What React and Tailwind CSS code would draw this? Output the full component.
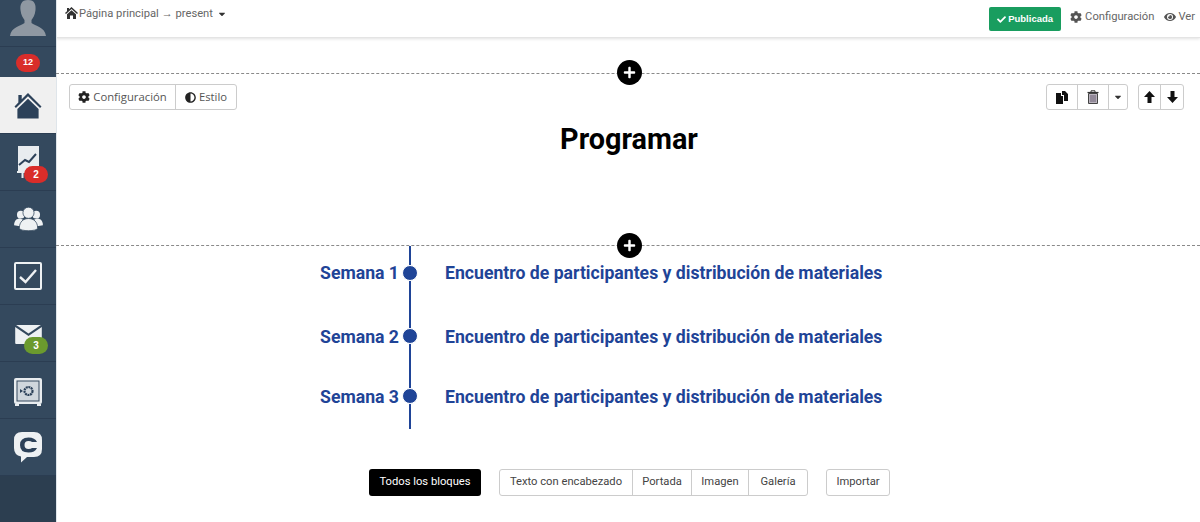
import { FaCaretDown, FaCheck, FaCog, FaEye, FaAdjust, FaPlus } from 'react-icons/fa';

function HomeIcon() {
  return (
    <svg width="30" height="27" viewBox="0 0 30 28" fill="#2c4159">
      <path d="M15 1 L29 15 L27.500 16.500 L15 4.500 L2.500 16.500 L1 15 L5 11 L5 3 L8.500 3 L8.500 7.500 Z" />
      <path d="M15 7 L26 17.500 L26 27.500 L4 27.500 L4 17.500 Z" />
    </svg>
  );
}

function SmallHomeIcon() {
  return (
    <svg className="-translate-y-[1px]" width="13" height="12" viewBox="0 0 13 12" fill="#333">
      <path d="M6.500 0 L13 6 L12 7 L6.500 2 L1 7 L0 6 L2 4.200 L2 1 L4 1 L4 2.300 Z" />
      <path d="M6.500 3.200 L11 7.300 V12 H8 V8.500 H5 V12 H2 V7.300 Z" />
    </svg>
  );
}

function ChartIcon() {
  return (
    <svg width="22" height="32" viewBox="0 0 22 32">
      <path d="M1 0 H22 V25 H1 Z" fill="#e8ecef" />
      <path d="M2 19 L8 14 L12 16 L19 8" stroke="#2c4159" strokeWidth="2" fill="none" />
      <path d="M0 25 H11 V27 H6.500 V32 H4.500 V27 H0 Z" fill="#e8ecef" />
    </svg>
  );
}

function UsersIcon() {
  return (
    <svg width="29" height="25" viewBox="0 0 30 26" fill="#eef1f3">
      <circle cx="7" cy="8" r="4" />
      <circle cx="23" cy="8" r="4" />
      <path d="M0 19 C0 14 3 12 6 12 L9 13 L6 20 Z" />
      <path d="M30 19 C30 14 27 12 24 12 L21 13 L24 20 Z" />
      <circle cx="15" cy="6" r="5.800" fill="#eef1f3" stroke="#34495e" strokeWidth="0.8" />
      <path d="M5.500 22 C5.500 15 10 12 15 12 C20 12 24.500 15 24.500 22 C24.500 25.500 5.500 25.500 5.500 22 Z" stroke="#34495e" strokeWidth="0.8" />
    </svg>
  );
}

function CheckIcon() {
  return (
    <svg width="28" height="28" viewBox="0 0 28 28" fill="none">
      <rect x="1" y="1" width="26" height="26" rx="1" stroke="#eef1f3" strokeWidth="2" />
      <path d="M6 15 L11.500 20 L22 8" stroke="#eef1f3" strokeWidth="2.400" />
    </svg>
  );
}

function MailIcon() {
  return (
    <svg className="mt-[3px]" width="27" height="19" viewBox="0 0 28 20" fill="#eef1f3">
      <path d="M1 0 H27 L14 9 Z" />
      <path d="M0 2 L14 11.500 L28 2 V19 Q28 20 27 20 H1 Q0 20 0 19 Z" />
    </svg>
  );
}

function SafeIcon() {
  return (
    <svg className="mt-[3px]" width="28" height="28" viewBox="0 0 28 28">
      <rect x="0" y="0" width="28" height="26" rx="2" fill="#e8ecef" />
      <rect x="3" y="3" width="22" height="20" fill="#cfd6dc" stroke="#34495e" strokeWidth="1" />
      <path d="M1 26 H5 V28 H1 Z M23 26 H27 V28 H23 Z" fill="#e8ecef" />
      <circle cx="14.500" cy="13" r="4" fill="none" stroke="#2c4159" strokeWidth="2.200" strokeDasharray="2 0.6" />
      <path d="M6 11 L9 13 L6 15 Z" fill="#2c4159" />
    </svg>
  );
}

function ChatCIcon() {
  return (
    <svg width="28" height="31" viewBox="0 0 28 31">
      <path d="M8 0 H20 Q28 0 28 8 V17 Q28 25 20 25 H13 L7 30.500 L7 24.500 Q0 23 0 16 V8 Q0 0 8 0 Z" fill="#eef1f3" />
      <path d="M23 10 Q21 5.500 14.500 5.500 Q6 5.500 6 13 Q6 20.500 14.500 20.500 Q21 20.500 23 16 H18 Q17 17 14.500 17 Q10.500 17 10.500 13 Q10.500 9 14.500 9 Q17 9 18 10 Z" fill="#2c4159" />
    </svg>
  );
}

function PasteIcon() {
  return (
    <svg width="12" height="13" viewBox="0 0 12 13" fill="#111">
      <path d="M0 2 H5 V5 H7 V13 H0 Z" />
      <path d="M6 0 H9 L12 3 V10 H8 V4 H6 Z" />
    </svg>
  );
}

function TrashIcon() {
  return (
    <svg width="12" height="14" viewBox="0 0 12 14" fill="none">
      <path d="M0.500 2.500 H11.500" stroke="#333" strokeWidth="1.200" />
      <path d="M4 2 V0.800 H8 V2" stroke="#333" />
      <path d="M1.500 3.500 H10.500 V13.500 H1.500 Z" fill="#b9b3bd" stroke="#444" />
      <path d="M4 5 V12 M6 5 V12 M8 5 V12" stroke="#6b5f75" />
    </svg>
  );
}

function ArrowIcon({ down }) {
  return (
    <svg className={down ? 'rotate-180' : ''} width="11" height="12" viewBox="0 0 11 12" fill="#111">
      <path d="M5.500 0 L11 6 H7.500 V12 H3.500 V6 H0 Z" />
    </svg>
  );
}

function NavItem({ active, children, badge, badgeColor }) {
  return (
    <div className={`relative flex h-[57px] items-center justify-center border-b border-[#2b3d52] ${active ? 'bg-[#f0f0f0]' : ''}`}>
      {children}
      {badge && (
        <span className={`absolute left-[24px] top-[32px] flex h-[17px] w-[24px] items-center justify-center rounded-full font-['Liberation_Sans',sans-serif] text-[10px] font-bold text-white ${badgeColor}`}>
          {badge}
        </span>
      )}
    </div>
  );
}

function Sidebar() {
  return (
    <aside className="relative flex w-[56px] shrink-0 flex-col bg-[#34495e] shadow-[1px_0_0_#dfe5ea]">
      <div className="flex h-[47px] items-start justify-center overflow-hidden border-b border-[#2b3d52]">
        <svg width="38" height="36" viewBox="0 0 38 36" fill="#8f98a2">
          <path d="M19 0 C12 0 11 5 11.500 10 C12 15 14 18 15.500 20 L15.500 23 C12 26 2 27 1 36 H37 C36 27 26 26 22.500 23 L22.500 20 C24 18 26 15 26.500 10 C27 5 26 0 19 0 Z" />
        </svg>
      </div>
      <div className="flex h-[30px] items-center justify-center pt-[2px]">
        <span className="flex h-[18px] w-[24px] items-center justify-center rounded-full bg-[#d92d2a] font-['Liberation_Sans',sans-serif] text-[9px] font-bold text-white">12</span>
      </div>
      <NavItem active><HomeIcon /></NavItem>
      <NavItem badge="2" badgeColor="bg-[#d92d2a]"><ChartIcon /></NavItem>
      <NavItem><UsersIcon /></NavItem>
      <NavItem><CheckIcon /></NavItem>
      <NavItem badge="3" badgeColor="bg-[#6b9a2e]"><MailIcon /></NavItem>
      <NavItem><SafeIcon /></NavItem>
      <NavItem><ChatCIcon /></NavItem>
      <div className="flex-1 bg-[#2c3e50]" />
    </aside>
  );
}

function TopBar() {
  return (
    <header className="flex h-[38px] items-start justify-between border-b border-[#e4e4e4] shadow-[0_1px_3px_rgba(0,0,0,0.12)] font-['Roboto',sans-serif] text-[11.2px] text-[#666]">
      <div className="flex items-center pl-[9px] pt-[6px]">
        <SmallHomeIcon />
        <span className="pl-[1px]">Página principal → present</span>
        <FaCaretDown className="ml-[4px] text-[10px] text-[#333]" />
      </div>
      <div className="flex items-center pr-[5px] pt-[7px]">
        <span className="flex h-[24px] w-[72px] items-center justify-center rounded-[2px] bg-[#199d5f] font-['Liberation_Sans',sans-serif] text-[9.5px] font-bold text-white">
          <FaCheck className="mr-[2px] text-[9px]" />
          Publicada
        </span>
        <span className="ml-[9px] flex -translate-y-[2px] items-center">
          <FaCog className="mr-[3px] text-[12px] text-[#555]" />
          Configuración
        </span>
        <span className="ml-[10px] flex -translate-y-[2px] items-center">
          <FaEye className="mr-[2px] text-[12px] text-[#555]" />
          Ver
        </span>
      </div>
    </header>
  );
}

function AddButton({ top }) {
  return (
    <button className={`absolute left-[561px] flex h-[25px] w-[25px] items-center justify-center rounded-full bg-black text-white ${top}`}>
      <FaPlus className="text-[13px]" />
    </button>
  );
}

function ProgramaSection() {
  return (
    <section className="relative mt-[35px] h-[172px] border-t border-dashed border-[#8a8a8a]">
      <AddButton top="top-[-14px]" />
      <div className="flex justify-between pl-[13px] pr-[16px] pt-[10px]">
        <div className="flex h-[26px] items-center rounded-[3px] border border-[#ccc] font-['Open_Sans',sans-serif] text-[11.3px] text-[#555]">
          <span className="flex h-full w-[106px] items-center justify-center border-r border-[#ccc]">
            <FaCog className="mr-[3px] text-[12px] text-[#222]" />
            Configuración
          </span>
          <span className="flex h-full w-[60px] items-center justify-center">
            <FaAdjust className="mr-[3px] text-[11px] text-[#222]" />
            Estilo
          </span>
        </div>
        <div className="flex gap-[10px]">
          <div className="flex h-[26px] items-center rounded-[3px] border border-[#ccc]">
            <span className="flex h-full w-[31px] items-center justify-center border-r border-[#ccc]"><PasteIcon /></span>
            <span className="flex h-full w-[31px] items-center justify-center border-r border-[#ccc]"><TrashIcon /></span>
            <span className="flex h-full w-[18px] items-center justify-center"><FaCaretDown className="text-[10px] text-[#333]" /></span>
          </div>
          <div className="flex h-[26px] items-center rounded-[3px] border border-[#ccc]">
            <span className="flex h-full w-[22px] items-center justify-center border-r border-[#ccc]"><ArrowIcon /></span>
            <span className="flex h-full w-[22px] items-center justify-center"><ArrowIcon down /></span>
          </div>
        </div>
      </div>
      <h1 className="mt-[11px] pl-[2px] text-center font-['Roboto',sans-serif] text-[28.8px] font-bold leading-[36px] text-black">Programar</h1>
    </section>
  );
}

const rows = [
  { week: 'Semana 1', height: 'h-[59px]', top: 'h-[19px]', label: 'h-[16px]' },
  { week: 'Semana 2', height: 'h-[61px]', top: 'h-[23px]', label: 'h-[18px]' },
  { week: 'Semana 3', height: 'h-[63px]', top: 'h-[22px]', label: 'h-[18px]' },
];

function Timeline() {
  return (
    <section className="relative border-t border-dashed border-[#8a8a8a] font-['Roboto',sans-serif] text-[17.65px] font-bold text-[#1f4497]">
      <AddButton top="top-[-13px]" />
      {rows.map((row) => (
        <div key={row.week} className={`flex ${row.height}`}>
          <div className="w-[346px] shrink-0 pr-[3px] text-right">
            <div className={row.top} />
            <div className={`flex items-center justify-end ${row.label}`}>{row.week}</div>
          </div>
          <div className="flex w-[16px] shrink-0 flex-col items-center">
            <div className={`w-[2px] bg-[#1f4497] ${row.top}`} />
            <div className="h-[16px] w-[16px] rounded-full border border-white bg-[#1f4497]" />
            <div className="w-[2px] flex-1 bg-[#1f4497]" />
          </div>
          <div className="pl-[27px]">
            <div className={row.top} />
            <div className={`flex items-center whitespace-nowrap ${row.label}`}>Encuentro de participantes y distribución de materiales</div>
          </div>
        </div>
      ))}
    </section>
  );
}

function BlockBar() {
  return (
    <div className="mt-[40px] flex justify-center gap-[18px] pl-[3px] font-['Roboto',sans-serif] text-[11.2px] text-[#444]">
      <span className="flex h-[27px] w-[112px] items-center justify-center rounded-[3px] bg-black pb-[1px] text-white">Todos los bloques</span>
      <div className="flex h-[27px] rounded-[3px] border border-[#ccc]">
        <span className="flex w-[133px] items-center justify-center border-r border-[#ccc] pb-[1px]">Texto con encabezado</span>
        <span className="flex w-[59px] items-center justify-center border-r border-[#ccc] pb-[1px]">Portada</span>
        <span className="flex w-[57px] items-center justify-center border-r border-[#ccc] pb-[1px]">Imagen</span>
        <span className="flex w-[58px] items-center justify-center pb-[1px]">Galería</span>
      </div>
      <span className="flex h-[27px] w-[64px] items-center justify-center rounded-[3px] border border-[#ccc] pb-[1px]">Importar</span>
    </div>
  );
}

export default function App() {
  return (
    <div className="flex h-[522px] w-[1200px] overflow-hidden bg-white">
      <Sidebar />
      <main className="min-w-0 flex-1">
        <TopBar />
        <ProgramaSection />
        <Timeline />
        <BlockBar />
      </main>
    </div>
  );
}
